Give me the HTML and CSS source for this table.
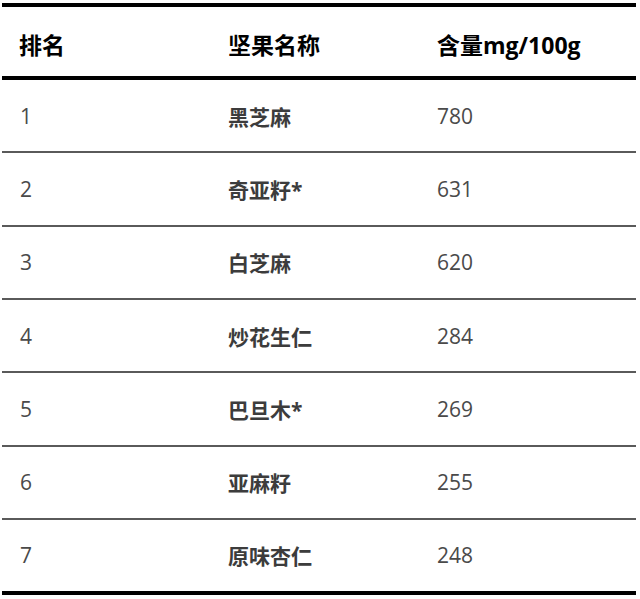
FILE: index.html
```html
<!DOCTYPE html>
<html lang="zh">
<head>
<meta charset="utf-8">
<link rel="stylesheet" href="styles.css">
</head>
<body>
<div class="table">
  <div class="row head">
    <div class="cell">排名</div>
    <div class="cell">坚果名称</div>
    <div class="cell">含量mg/100g</div>
  </div>
  <div class="row item">
    <div class="cell num">1</div>
    <div class="cell name">黑芝麻</div>
    <div class="cell num">780</div>
  </div>
  <div class="row item">
    <div class="cell num">2</div>
    <div class="cell name">奇亚籽*</div>
    <div class="cell num">631</div>
  </div>
  <div class="row item">
    <div class="cell num">3</div>
    <div class="cell name">白芝麻</div>
    <div class="cell num">620</div>
  </div>
  <div class="row item">
    <div class="cell num">4</div>
    <div class="cell name">炒花生仁</div>
    <div class="cell num">284</div>
  </div>
  <div class="row item">
    <div class="cell num">5</div>
    <div class="cell name">巴旦木*</div>
    <div class="cell num">269</div>
  </div>
  <div class="row item">
    <div class="cell num">6</div>
    <div class="cell name">亚麻籽</div>
    <div class="cell num">255</div>
  </div>
  <div class="row item last">
    <div class="cell num">7</div>
    <div class="cell name">原味杏仁</div>
    <div class="cell num">248</div>
  </div>
</div>
</body>
</html>
```
FILE: styles.css
```css
html, body {
  margin: 0;
  padding: 0;
  background: #fff;
}
body {
  font-family: "Open Sans", "Noto Sans CJK SC", sans-serif;
}
.table {
  margin: 3px 0 0 2px;
  width: 634px;
  border-top: 4px solid #000;
  border-bottom: 4px solid #000;
}
.row {
  display: grid;
  grid-template-columns: 208px 209px 1fr;
  align-items: center;
}
.cell {
  padding-left: 18px;
  white-space: nowrap;
}
.head {
  border-bottom: 4px solid #000;
  font-weight: 700;
  font-size: 23px;
  color: #000;
  padding-top: 4px;
  box-sizing: border-box;
  height: 73px;
}
.head .cell:first-child {
  padding-left: 17px;
}
.item {
  height: 71.33px;
  border-bottom: 2px solid #5a5a5a;
}
.item.last {
  height: 71px;
  border-bottom: none;
}
.num {
  font-size: 21px;
  color: #4a4a4a;
}
.name {
  font-size: 21px;
  font-weight: 700;
  color: #3c3c3c;
}
```
